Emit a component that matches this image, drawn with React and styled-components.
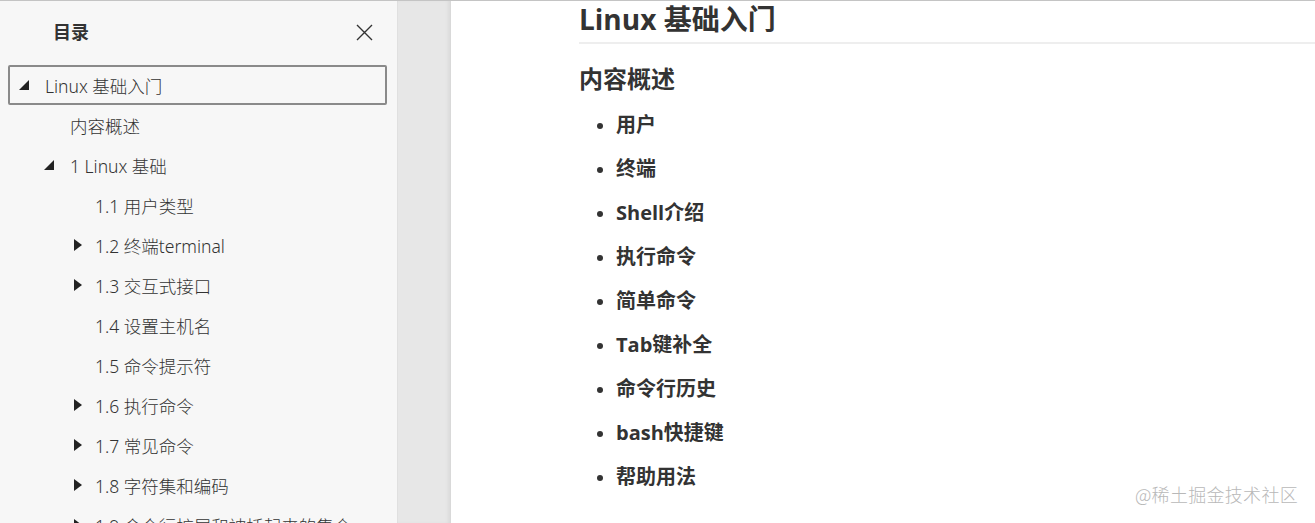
import React from "react";
import styled, { createGlobalStyle } from "styled-components";

const Global = createGlobalStyle`
  html, body { margin: 0; padding: 0; height: 100%; overflow: hidden; }
  body { font-family: "Noto Sans", "Noto Sans CJK SC", sans-serif; color: #333; }
  #root { height: 100%; }
`;

const Page = styled.div`
  display: flex;
  height: 100vh;
  border-top: 1px solid #c4c4c4;
  box-sizing: border-box;
  position: relative;
  background: #fff;
`;

const Sidebar = styled.aside`
  width: 397px;
  flex: none;
  background: #f7f7f7;
  display: flex;
  flex-direction: column;
  overflow: hidden;
`;

const SideHeader = styled.div`
  height: 64px;
  flex: none;
  display: flex;
  align-items: center;
  justify-content: space-between;
  padding: 0 24px 0 53px;
  box-sizing: border-box;
`;

const SideTitle = styled.h2`
  margin: 0;
  font-family: "Noto Sans CJK SC", sans-serif;
  font-size: 18px;
  font-weight: 700;
  color: #333;
  transform: translateY(-2px);
`;

const CloseBtn = styled.button`
  border: 0;
  background: none;
  padding: 0;
  width: 18px;
  height: 18px;
  display: flex;
  align-items: center;
  justify-content: center;
  color: #333;
  cursor: pointer;
  transform: translateY(-1px);
`;

const TocList = styled.ul`
  list-style: none;
  margin: 0;
  padding: 0;
  flex: none;
`;

const TocRow = styled.li`
  height: 40px;
  box-sizing: border-box;
  display: flex;
  align-items: center;
  padding-left: ${(p) => 9 + p.$level * 25}px;
  margin: 0 10px 0 8px;
  border: 2px solid ${(p) => (p.$active ? "#8a8a8a" : "transparent")};
  border-radius: 2px;
  font-family: "Noto Sans", "Noto Sans CJK SC", sans-serif;
  font-size: 17.5px;
  font-weight: 300;
  color: #333;
  white-space: nowrap;
`;

const ArrowSlot = styled.span`
  width: 26px;
  flex: none;
  display: flex;
  align-items: center;
  padding-left: ${(p) => (p.$open ? 0 : 5)}px;
  box-sizing: border-box;
`;

const Gutter = styled.div`
  width: 54px;
  flex: none;
  background: #e7e7e7;
  box-shadow: inset -4px 0 4px -2px rgba(0, 0, 0, 0.08), inset 1px 0 0 #e0e0e0;
`;

const Content = styled.main`
  flex: 1;
  padding-left: 128px;
  overflow: hidden;
  font-family: "Open Sans", "Noto Sans CJK SC", sans-serif;
  color: #333;
`;

const H1 = styled.h1`
  margin: 0;
  padding: 2px 0 7px;
  font-size: 28px;
  line-height: 32px;
  font-weight: 700;
  border-bottom: 2px solid #eeeeee;
`;

const H2 = styled.h2`
  margin: 18px 0 0;
  font-size: 24px;
  line-height: 34px;
  font-weight: 700;
`;

const Bullets = styled.ul`
  margin: 7px 0 0;
  padding-left: 37px;
`;

const Bullet = styled.li`
  font-size: 20px;
  line-height: 44px;
  font-weight: 700;
  &::marker { font-size: 18px; }
`;

const Watermark = styled.div`
  position: absolute;
  right: 17px;
  bottom: 16px;
  font-family: "Noto Sans CJK SC", sans-serif;
  font-size: 18px;
  font-weight: 300;
  color: #b8b8b8;
  letter-spacing: 0.3px;
`;

const OpenArrow = () => (
  <svg width="10" height="10" viewBox="0 0 10 10">
    <path d="M10 0 L10 10 L0 10 Z" fill="#222" />
  </svg>
);

const ClosedArrow = () => (
  <svg width="8" height="12" viewBox="0 0 8 12">
    <path d="M0 0 L8 6 L0 12 Z" fill="#222" />
  </svg>
);

const toc = [
  { level: 0, text: "Linux 基础入门", arrow: "open", active: true },
  { level: 1, text: "内容概述" },
  { level: 1, text: "1 Linux 基础", arrow: "open" },
  { level: 2, text: "1.1 用户类型" },
  { level: 2, text: "1.2 终端terminal", arrow: "closed" },
  { level: 2, text: "1.3 交互式接口", arrow: "closed" },
  { level: 2, text: "1.4 设置主机名" },
  { level: 2, text: "1.5 命令提示符" },
  { level: 2, text: "1.6 执行命令", arrow: "closed" },
  { level: 2, text: "1.7 常见命令", arrow: "closed" },
  { level: 2, text: "1.8 字符集和编码", arrow: "closed" },
  { level: 2, text: "1.9 命令行扩展和被括起来的集合", arrow: "closed" },
];

const items = ["用户", "终端", "Shell介绍", "执行命令", "简单命令", "Tab键补全", "命令行历史", "bash快捷键", "帮助用法"];

export default function App() {
  return (
    <>
      <Global />
      <Page>
        <Sidebar>
          <SideHeader>
            <SideTitle>目录</SideTitle>
            <CloseBtn aria-label="close">
              <svg width="17" height="17" viewBox="0 0 17 17">
                <path d="M1 1 L16 16 M16 1 L1 16" stroke="#333" strokeWidth="1.4" fill="none" />
              </svg>
            </CloseBtn>
          </SideHeader>
          <TocList>
            {toc.map((t, i) => (
              <TocRow key={i} $level={t.level} $active={t.active}>
                <ArrowSlot $open={t.arrow === "open"}>
                  {t.arrow === "open" && <OpenArrow />}
                  {t.arrow === "closed" && <ClosedArrow />}
                </ArrowSlot>
                {t.text}
              </TocRow>
            ))}
          </TocList>
        </Sidebar>
        <Gutter />
        <Content>
          <H1>Linux 基础入门</H1>
          <H2>内容概述</H2>
          <Bullets>
            {items.map((it) => (
              <Bullet key={it}>{it}</Bullet>
            ))}
          </Bullets>
        </Content>
        <Watermark>@稀土掘金技术社区</Watermark>
      </Page>
    </>
  );
}
